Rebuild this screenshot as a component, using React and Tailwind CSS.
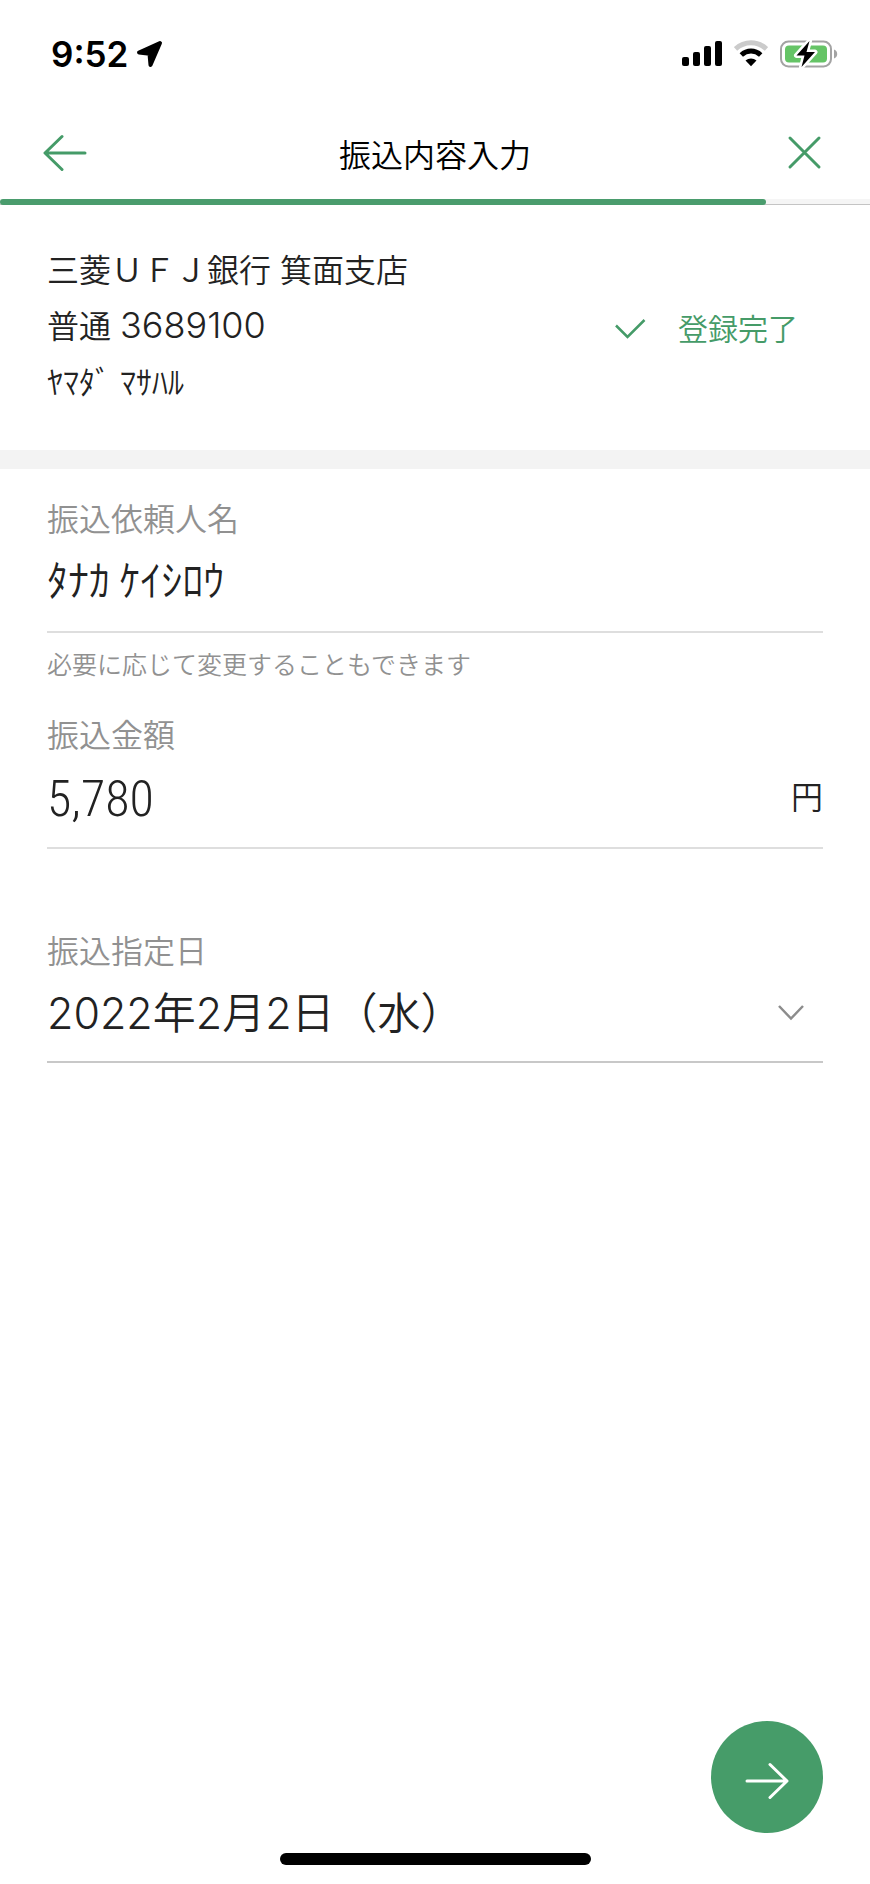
import { useState } from "react";

function StatusBar() {
  return (
    <div className="flex h-[108px] items-center justify-between pl-[51px] pr-8 text-black">
      <div className="flex items-center gap-2">
        <span className="font-['Inter','Liberation_Sans',sans-serif] text-[35px] font-semibold leading-10">
          9:52
        </span>
        <svg width="28" height="28" viewBox="0 0 28 28" fill="currentColor" aria-hidden="true">
          <path
            d="M24 3 3 12.500 13.500 13.800 14.500 25Z"
            stroke="currentColor"
            strokeWidth="4"
            strokeLinejoin="round"
          />
        </svg>
      </div>
      <div className="flex items-center gap-3">
        <svg width="40" height="28" viewBox="0 0 40 28" fill="currentColor" aria-hidden="true">
          <rect x="0" y="17" width="7" height="9" rx="2" />
          <rect x="11" y="12" width="7" height="14" rx="2" />
          <rect x="22" y="6" width="7" height="20" rx="2" />
          <rect x="33" y="1" width="7" height="25" rx="2" />
        </svg>
        <svg width="34" height="28" viewBox="0 0 34 28" fill="none" aria-hidden="true">
          <path d="M1.500 9C10.500 .800 23.500 .800 32.500 9" stroke="#cbcbcb" strokeWidth="5" />
          <path d="M7.300 15C13 9.800 21 9.800 26.700 15" stroke="#000" strokeWidth="5" />
          <path d="M11.500 20.500C14.700 17.700 19.300 17.700 22.500 20.500L17 26.200Z" fill="#000" />
        </svg>
        <svg width="58" height="28" viewBox="0 0 58 28" aria-hidden="true">
          <rect x="1" y="1.500" width="50" height="25" rx="7.500" fill="#fff" stroke="#a3a3a3" strokeWidth="2" />
          <rect x="5" y="5.500" width="42" height="17" rx="4" fill="#65c466" />
          <path d="M54 9.500C58.300 11 58.300 17 54 18.500Z" fill="#a3a3a3" />
          <path
            d="M29.500 1 16.500 15.500H24.500L21.500 27 35 12H26.500Z"
            fill="#000"
            stroke="#fff"
            strokeWidth="5"
            strokeLinejoin="round"
            paintOrder="stroke"
          />
        </svg>
      </div>
    </div>
  );
}

function ArrowIcon({ className }) {
  return (
    <svg
      className={className}
      width="44"
      height="40"
      viewBox="0 0 44 40"
      fill="none"
      stroke="currentColor"
      strokeWidth="3"
      strokeLinecap="round"
      strokeLinejoin="round"
      aria-hidden="true"
    >
      <path d="M2 20H41M25 3.500 42 20 25 36.500" />
    </svg>
  );
}

function Header() {
  return (
    <header>
      <div className="flex h-[91px] items-center justify-between px-[43px] pb-[2px]">
        <button type="button" aria-label="戻る" className="text-[#459b68]">
          <ArrowIcon className="rotate-180" />
        </button>
        <h1 className="text-[32px] leading-10 text-black">振込内容入力</h1>
        <button type="button" aria-label="閉じる" className="text-[#459b68]">
          <svg
            width="44"
            height="40"
            viewBox="0 0 44 40"
            fill="none"
            stroke="currentColor"
            strokeWidth="3"
            strokeLinecap="round"
            aria-hidden="true"
          >
            <path d="M7 5 36 34M36 5 7 34" />
          </svg>
        </button>
      </div>
      <div className="h-[6px] border-b border-[#c4c4c4] bg-[#f5f5f5]">
        <div className="h-[6px] w-[88%] rounded-full bg-[#4a9c6d]" />
      </div>
    </header>
  );
}

function Payee() {
  return (
    <section className="flex items-center justify-between border-b-[19px] border-[#f3f3f3] pb-[39px] pl-[47px] pr-[72px] pt-[38px]">
      <div className="font-['Inter','Noto_Sans_CJK_JP',sans-serif] text-[32px] leading-[56px]">
        <p>三菱ＵＦＪ銀行 箕面支店</p>
        <p>
          普通 <span className="text-[36px] leading-none">3689100</span>
        </p>
        <p>ﾔﾏﾀﾞ ﾏｻﾊﾙ</p>
      </div>
      <p className="flex items-center gap-8 text-[30px] leading-10 text-[#459b68]">
        <svg
          className="mt-1"
          width="32"
          height="24"
          viewBox="0 0 32 24"
          fill="none"
          stroke="currentColor"
          strokeWidth="2.500"
          aria-hidden="true"
        >
          <path d="M2 8.500 13.500 20 30.500 3" />
        </svg>
        登録完了
      </p>
    </section>
  );
}

function Field({ id, label, hint, borderClass = "border-[#dedede]", children }) {
  return (
    <div>
      <label htmlFor={id} className="block text-[32px] leading-[48px] text-[#919191]">
        {label}
      </label>
      <div className={`flex items-center border-b-2 pb-[18px] ${borderClass}`}>{children}</div>
      <p className="h-[76px] pt-3 text-[25px] leading-9 text-[#919191]">{hint}</p>
    </div>
  );
}

export default function App() {
  const [name, setName] = useState("ﾀﾅｶ ｹｲｼﾛｳ");
  const [amount, setAmount] = useState("5,780");
  const [date, setDate] = useState("2022-02-02");

  return (
    <div className="flex min-h-screen flex-col bg-white font-['Noto_Sans_CJK_JP',sans-serif] font-[350] text-[#222]">
      <StatusBar />
      <Header />
      <Payee />
      <form className="flex flex-1 flex-col px-[47px] pt-6" onSubmit={(e) => e.preventDefault()}>
        <Field id="name" label="振込依頼人名" hint="必要に応じて変更することもできます">
          <input
            id="name"
            value={name}
            onChange={(e) => setName(e.target.value)}
            className="h-[72px] min-w-0 flex-1 text-[42px] outline-none"
          />
        </Field>
        <Field id="amount" label="振込金額">
          <input
            id="amount"
            inputMode="numeric"
            value={amount}
            onChange={(e) => setAmount(e.target.value)}
            className="h-[72px] min-w-0 flex-1 pt-3 font-['Roboto_Condensed','Liberation_Sans_Narrow','Roboto',sans-serif] text-[50px] font-light outline-none"
          />
          <span className="pt-1 text-[32px]">円</span>
        </Field>
        <Field id="date" label="振込指定日" borderClass="border-[#c8c8c8]">
          <select
            id="date"
            value={date}
            onChange={(e) => setDate(e.target.value)}
            className="h-[70px] min-w-0 flex-1 appearance-none pt-2 font-['Inter','Noto_Sans_CJK_JP',sans-serif] text-[43px] outline-none"
          >
            <option value="2022-02-02">2022年2月2日（水）</option>
          </select>
          <svg
            className="mr-[18px] mt-2"
            width="28"
            height="18"
            viewBox="0 0 28 18"
            fill="none"
            stroke="#8c8c8c"
            strokeWidth="2.500"
            aria-hidden="true"
          >
            <path d="M2 3 14 15.500 26 3" />
          </svg>
        </Field>
        <button
          type="submit"
          aria-label="次へ"
          className="mt-auto flex size-28 items-center justify-center self-end rounded-full bg-[#469c69] pt-2 text-white"
        >
          <ArrowIcon />
        </button>
      </form>
      <div className="flex justify-center pb-[19px] pt-5">
        <div className="h-3 w-[311px] rounded-full bg-black" />
      </div>
    </div>
  );
}
